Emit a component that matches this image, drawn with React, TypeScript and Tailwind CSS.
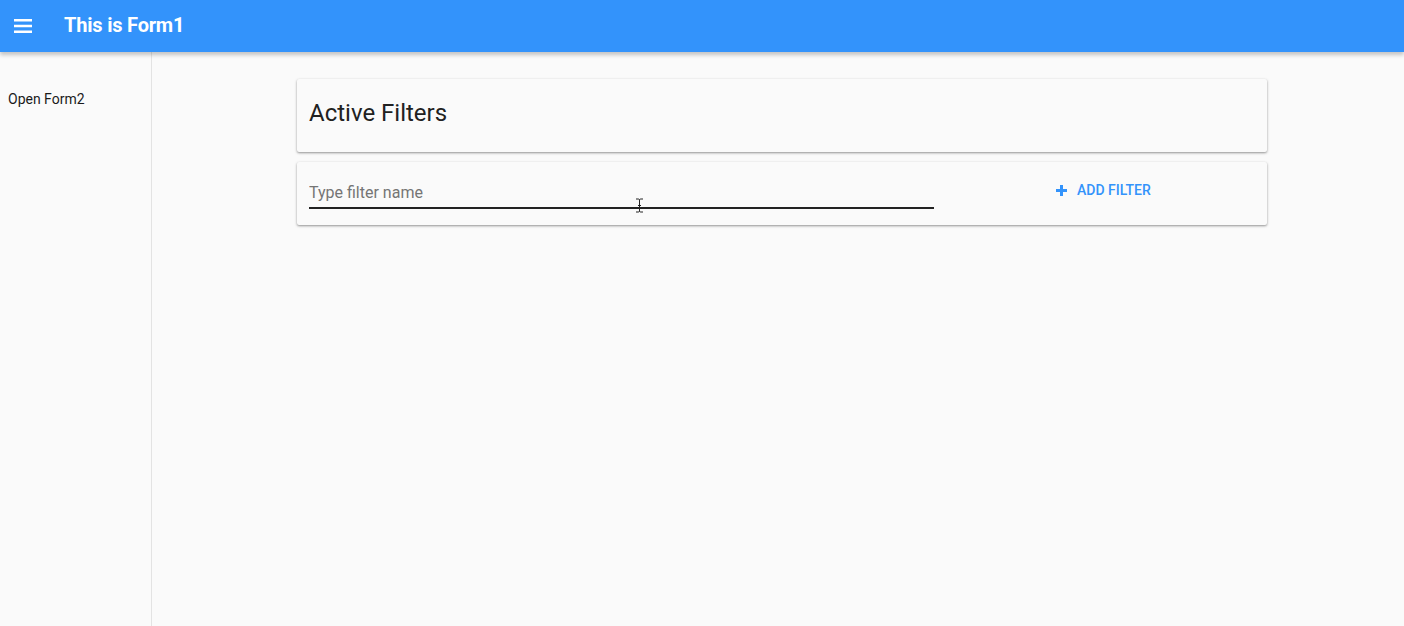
import { useState } from "react";

function MenuIcon() {
  return (
    <svg width="18" height="16" viewBox="0 0 18 16" fill="white">
      <rect x="0" y="1" width="18" height="2.5" />
      <rect x="0" y="6.75" width="18" height="2.5" />
      <rect x="0" y="12.5" width="18" height="2.5" />
    </svg>
  );
}

function PlusIcon() {
  return (
    <svg width="11" height="11" viewBox="0 0 11 11" fill="#3393fb">
      <rect x="4" y="0" width="3" height="11" />
      <rect x="0" y="4" width="11" height="3" />
    </svg>
  );
}

export default function App() {
  const [filter, setFilter] = useState("");

  return (
    <div className="flex h-[626px] flex-col bg-[#fafafa] font-['Roboto',sans-serif]">
      <header className="relative z-10 flex h-[52px] shrink-0 items-center bg-[#3393fb] shadow-[0_3px_4px_rgba(0,0,0,0.22)]">
        <button className="ml-[14px] flex h-[18px] w-[18px] items-center">
          <MenuIcon />
        </button>
        <h1 className="ml-[32px] -mt-[2px] text-[20px] font-bold tracking-[-0.2px] text-white">
          This is Form1
        </h1>
      </header>

      <div className="flex flex-1">
        <aside className="w-[152px] shrink-0 border-r border-[#e3e3e3] pt-[37px]">
          <a className="ml-[8px] block text-[14px] text-[#1a1a1a]">Open Form2</a>
        </aside>

        <main className="flex-1 pt-[27px]">
          <div className="ml-[145px] flex w-[970px] flex-col gap-[10px]">
            <section className="h-[73px] rounded-[2px] bg-[#fafafa] px-3 pt-[20px] shadow-[0_1px_3px_rgba(0,0,0,0.25),0_1px_2px_rgba(0,0,0,0.2)]">
              <h2 className="text-[24px] leading-[28px] text-[#212121]">Active Filters</h2>
            </section>

            <section className="relative flex h-[63px] items-start rounded-[2px] bg-[#fafafa] px-3 pt-[18px] shadow-[0_1px_3px_rgba(0,0,0,0.25),0_1px_2px_rgba(0,0,0,0.2)]">
              <input
                value={filter}
                onChange={(e) => setFilter(e.target.value)}
                placeholder="Type filter name"
                className="h-[29px] w-[625px] border-b-2 border-[#222] bg-transparent pb-[3px] text-[16px] text-[#333] outline-none placeholder:text-[#757575]"
              />
              <button className="ml-[122px] flex items-center gap-[10px] text-[14px] font-medium uppercase text-[#3393fb]">
                <PlusIcon />
                Add filter
              </button>

              <svg
                className="pointer-events-none absolute left-[338px] top-[36px]"
                width="9"
                height="15"
                viewBox="0 0 9 15"
                fill="none"
                stroke="#222"
                strokeWidth="1"
              >
                <path d="M1 1h2.5M5.5 1H8M3.5 1c1 0 1 1 1 2v9c0 1 0 2-1 2M5.5 1c-1 0-1 1-1 2v9c0 1 0 2 1 2M1 14h2.5M5.5 14H8M3 7.5h3" />
              </svg>
            </section>
          </div>
        </main>
      </div>
    </div>
  );
}
